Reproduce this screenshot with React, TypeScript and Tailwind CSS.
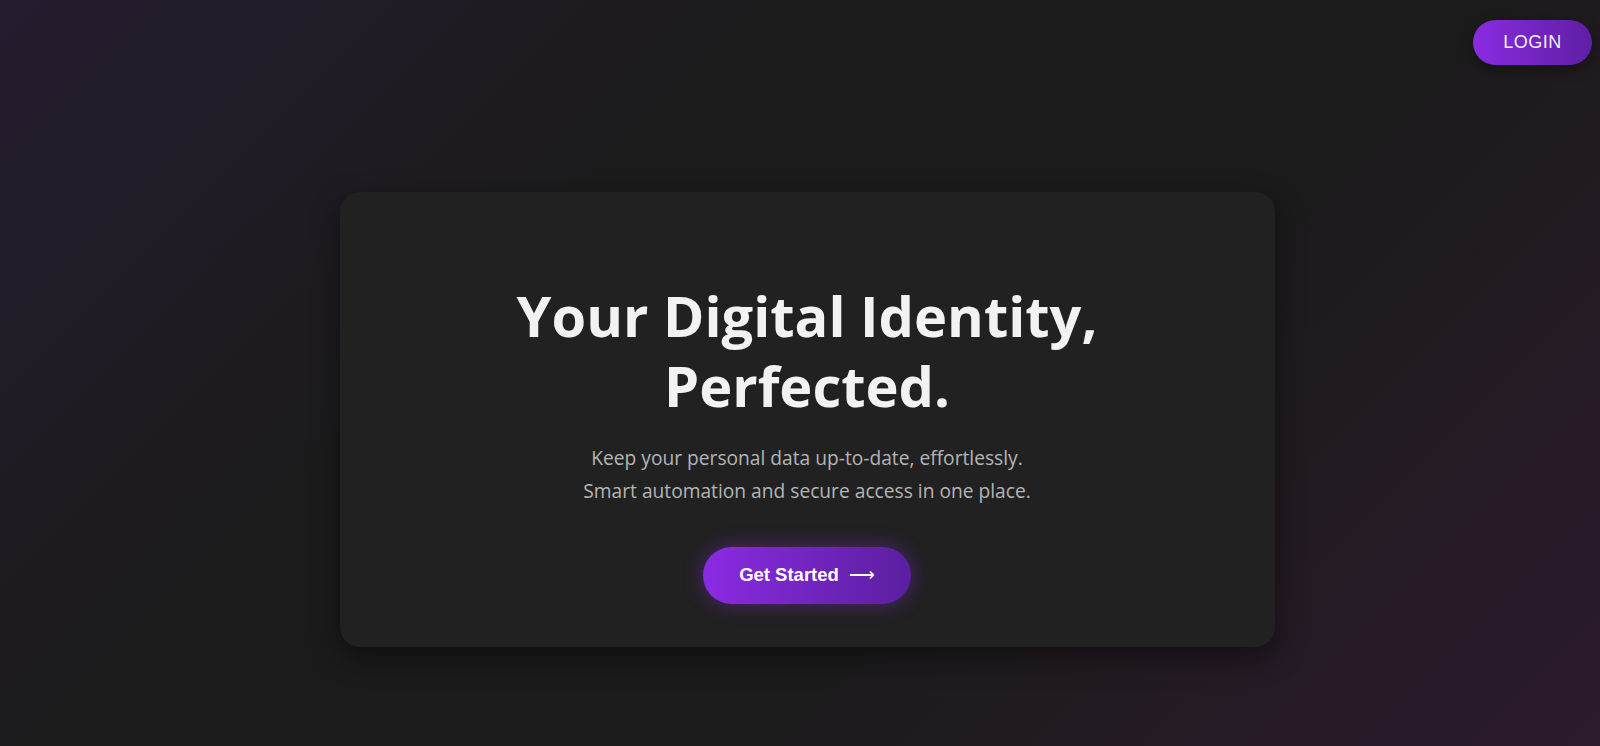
export default function App() {
  return (
    <div className="relative min-h-screen w-full overflow-hidden bg-[linear-gradient(135deg,#251c2f_0%,#1b1b1b_35%,#1b1b1b_62%,#2c1a2d_100%)]">
      {/* top-right login */}
      <button className="absolute right-2 top-5 h-[45px] w-[119px] rounded-full bg-[linear-gradient(90deg,#8a2be2,#5e1fa3)] text-[18px] tracking-[0.5px] text-white/95 shadow-[0_4px_14px_rgba(0,0,0,0.35)] [font-family:'Liberation_Sans',Arial,sans-serif]">
        LOGIN
      </button>

      <div className="flex min-h-screen items-center justify-center pt-[93px] pl-[14px]">
        <div className="flex h-[455px] w-[935px] flex-col items-center justify-center rounded-[20px] bg-[#212121] pt-[44px] text-center shadow-[0_10px_30px_rgba(0,0,0,0.45)]">
          <h1 className="text-[56px] font-bold leading-[70px] text-[#f2f2f2] [font-family:'Open_Sans',sans-serif]">
            Your Digital Identity,
            <br />
            Perfected.
          </h1>
          <p className="mt-[21px] text-[19.2px] leading-[33px] text-[#b5b5b5] [font-family:'Open_Sans',sans-serif]">
            Keep your personal data up-to-date, effortlessly.
            <br />
            Smart automation and secure access in one place.
          </p>
          <button className="mt-[40px] flex h-[57px] w-[208px] items-center justify-center gap-[10px] rounded-full bg-[linear-gradient(90deg,#8a2be2,#5b1f9f)] text-[18.5px] font-bold text-white shadow-[0_0_20px_rgba(138,43,226,0.45)] [font-family:'Liberation_Sans',Arial,sans-serif]">
            Get Started
            <span className="text-[18px] font-normal leading-none">&#x27F6;</span>
          </button>
        </div>
      </div>
    </div>
  );
}
